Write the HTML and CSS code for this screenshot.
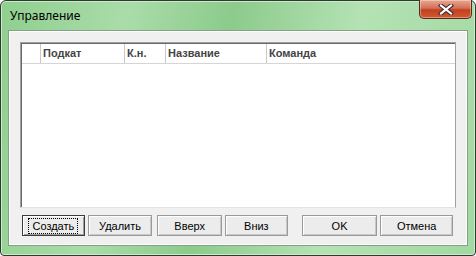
FILE: index.html
```html
<!DOCTYPE html>
<html>
<head>
<meta charset="utf-8">
<link rel="stylesheet" href="styles.css">
</head>
<body>
<div class="window">
  <div class="titlebar">
    <span class="title">Управление</span>
    <div class="close">
      <svg width="18" height="11" viewBox="0 0 18 11">
        <path d="M4 1.5 L14 9.5 M14 1.5 L4 9.5" stroke="#3a2a2a" stroke-width="4.2" stroke-linecap="square"/>
        <path d="M4 1.5 L14 9.5 M14 1.5 L4 9.5" stroke="#ffffff" stroke-width="2.2" stroke-linecap="square"/>
      </svg>
    </div>
  </div>
  <div class="client">
    <div class="list">
      <div class="header">
        <div class="col c0"></div>
        <div class="col c1">Подкат</div>
        <div class="col c2">К.н.</div>
        <div class="col c3">Название</div>
        <div class="col c4">Команда</div>
      </div>
    </div>
    <div class="buttons">
      <button class="btn default w-create"><span class="focus">Создать</span></button>
      <button class="btn w-del">Удалить</button>
      <button class="btn w-up gap-l">Вверх</button>
      <button class="btn w-down">Вниз</button>
      <button class="btn w-ok gap-l2">OK</button>
      <button class="btn w-cancel">Отмена</button>
    </div>
  </div>
</div>
</body>
</html>
```
FILE: styles.css
```css
html, body {
  margin: 0;
  padding: 0;
  background: #ffffff;
}
body {
  width: 476px;
  height: 256px;
  overflow: hidden;
}
.window {
  box-sizing: border-box;
  width: 476px;
  height: 256px;
  border: 1px solid #2f3a2f;
  border-radius: 6px 6px 4px 4px;
  background: linear-gradient(100deg, #8fcf8f 0%, #a9dca9 25%, #8ccb8c 45%, #b4e2b4 70%, #a2d8a2 100%);
  box-shadow: inset 0 0 0 1px #c9ecc9;
  padding: 0 7px 9px 7px;
  display: flex;
  flex-direction: column;
}
.titlebar {
  height: 29px;
  display: flex;
  align-items: flex-start;
  justify-content: space-between;
  flex: none;
}
.title {
  font-family: "Noto Sans", "DejaVu Sans", sans-serif;
  font-size: 12px;
  color: #000;
  margin-top: 6px;
  margin-left: 2px;
}
.close {
  width: 51px;
  height: 18px;
  margin-top: -1px;
  margin-right: -4px;
  border: 1px solid #5a2a20;
  border-top: none;
  border-radius: 0 0 5px 5px;
  background: linear-gradient(180deg, #e8a890 0%, #d47058 45%, #c2401f 55%, #d05a30 100%);
  display: flex;
  align-items: center;
  justify-content: center;
  box-shadow: inset 0 0 0 1px rgba(255,255,255,0.35);
}
.client {
  flex: 1;
  background: #f0f0f0;
  border: 1px solid #86a086;
  box-shadow: inset 0 0 0 1px #ffffff;
  display: flex;
  flex-direction: column;
  padding: 11px 11px 9px 11px;
}
.list {
  flex: 1;
  background: #ffffff;
  border-top: 1px solid #a0a0a0;
  border-left: 1px solid #a0a0a0;
  border-right: 1px solid #a0a0a0;
  border-bottom: 1px solid #e3e3e3;
  box-shadow: inset 1px 1px 0 #696969;
}
.header {
  display: flex;
  height: 19px;
  margin-left: 1px;
  margin-top: 1px;
  border-bottom: 1px solid #d5d5d5;
  font-family: "Liberation Sans", "DejaVu Sans", sans-serif;
  font-size: 11px;
  font-weight: bold;
  color: #444;
}
.col {
  box-sizing: border-box;
  border-right: 1px solid #c8c8c8;
  padding-left: 2px;
  line-height: 19px;
  white-space: nowrap;
}
.c0 { width: 19px; }
.c1 { width: 84px; }
.c2 { width: 41px; }
.c3 { width: 101px; }
.c4 { width: 70px; border-right: none; }
.buttons {
  display: flex;
  margin-top: 7px;
  height: 21px;
  padding-left: 2px;
}
.btn {
  box-sizing: border-box;
  height: 21px;
  margin: 0 3px 0 0;
  padding: 0;
  font-family: "Liberation Sans", "DejaVu Sans", sans-serif;
  font-size: 11px;
  color: #000;
  background: #ececec;
  border: 1px solid #9a9a9a;
  box-shadow: inset 1px 1px 0 #ffffff, inset -1px -1px 0 #c8c8c8;
}
.btn.default {
  border: 1px solid #3c3c3c;
  box-shadow: inset 1px 1px 0 #ffffff, inset -1px -1px 0 #a0a0a0;
}
.focus {
  display: inline-block;
  border: 1px dotted #000;
  padding: 1px 3px;
  line-height: 12px;
}
.w-create { width: 63px; }
.w-del { width: 65px; }
.w-up { width: 65px; }
.w-down { width: 63px; }
.w-ok { width: 76px; }
.w-cancel { width: 73px; }
.gap-l { margin-left: 2px; }
.gap-l2 { margin-left: 11px; }
```
